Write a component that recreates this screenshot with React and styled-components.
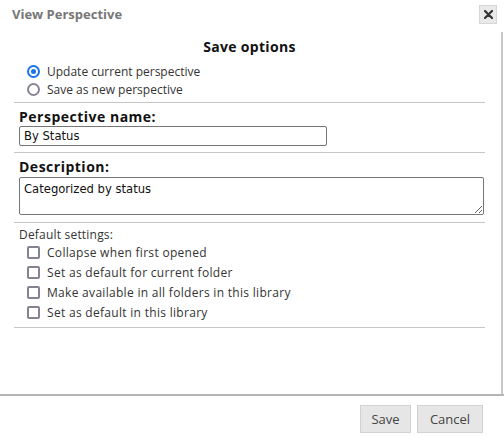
import React from 'react';
import styled, { createGlobalStyle } from 'styled-components';

const GlobalStyle = createGlobalStyle`
  html, body {
    margin: 0;
    padding: 0;
    background: #fff;
  }
  body {
    font-family: "Open Sans", "Liberation Sans", sans-serif;
    color: #222;
  }
`;

const Dialog = styled.div`
  width: 504px;
  height: 447px;
  display: flex;
  flex-direction: column;
  box-sizing: border-box;
  background: #fff;
`;

const Header = styled.div`
  height: 32px;
  display: flex;
  align-items: flex-start;
  justify-content: space-between;
  padding: 0 7px 0 12px;
  box-sizing: border-box;
`;

const Title = styled.div`
  font-size: 13px;
  font-weight: 700;
  color: #777;
  line-height: 28px;
`;

const CloseButton = styled.button`
  margin-top: 5px;
  width: 18px;
  height: 19px;
  padding: 0;
  border: 1px solid #d6d6d6;
  background: #e9e9e9;
  display: flex;
  align-items: center;
  justify-content: center;
`;

const Body = styled.div`
  flex: 1;
  border-right: 2px solid #c8c8c8;
  margin-right: 1px;
  padding: 0 16px 0 14px;
  display: flex;
  flex-direction: column;
`;

const SectionTitle = styled.div`
  margin-top: 5px;
  text-align: center;
  font-size: 14px;
  font-weight: 700;
  letter-spacing: 0.3px;
  line-height: 20px;
  color: #111;
`;

const OptionList = styled.div`
  margin-top: ${(p) => p.$top ?? 5}px;
  padding-left: 13px;
  display: flex;
  flex-direction: column;
`;

const OptionRow = styled.label`
  height: ${(p) => p.$h || 18}px;
  display: flex;
  align-items: center;
  gap: 7px;
  font-size: 12px;
  letter-spacing: ${(p) => p.$ls || 0}px;
  color: #333;
`;

const Radio = styled.span`
  width: 13px;
  height: 13px;
  box-sizing: border-box;
  border-radius: 50%;
  border: 2px solid ${(p) => (p.$checked ? '#1a73e8' : '#8a8594')};
  display: flex;
  align-items: center;
  justify-content: center;
  &::after {
    content: '';
    display: ${(p) => (p.$checked ? 'block' : 'none')};
    width: 5px;
    height: 5px;
    border-radius: 50%;
    background: #1a73e8;
  }
`;

const Checkbox = styled.span`
  width: 13px;
  height: 13px;
  box-sizing: border-box;
  border-radius: 2px;
  border: 2px solid #878190;
  background: #fff;
`;

const Divider = styled.div`
  height: 1px;
  background: #c6c6c6;
  margin-top: ${(p) => p.$top || 0}px;
`;

const FieldLabel = styled.div`
  margin-top: 5px;
  padding-left: 5px;
  font-size: 14px;
  font-weight: 700;
  letter-spacing: 0.5px;
  line-height: 18px;
  color: #111;
`;

const TextInput = styled.input`
  display: block;
  margin-left: 5px;
  width: 308px;
  height: 20px;
  box-sizing: border-box;
  border: 1px solid #767676;
  border-radius: 2px;
  padding: 0 4px;
  font-family: "DejaVu Sans", Verdana, sans-serif;
  font-size: 11.6px;
  color: #111;
  outline: none;
`;

const TextArea = styled.textarea`
  display: block;
  margin: 1px 0 0 5px;
  width: 465px;
  height: 38px;
  box-sizing: border-box;
  border: 1px solid #767676;
  border-radius: 2px;
  padding: 4px 4px;
  font-family: "DejaVu Sans", Verdana, sans-serif;
  font-size: 11.6px;
  color: #111;
  resize: both;
  outline: none;
`;

const PlainLabel = styled.div`
  margin-top: 4px;
  padding-left: 5px;
  font-size: 12px;
  letter-spacing: 0.2px;
  line-height: 15px;
  color: #333;
`;

const Footer = styled.div`
  border-top: 2px solid #b4b4b4;
  height: 53px;
  box-sizing: border-box;
  display: flex;
  justify-content: flex-end;
  align-items: flex-start;
  gap: 6px;
  padding: 9px 21px 0 0;
`;

const Button = styled.button`
  height: 28px;
  width: ${(p) => p.$w}px;
  padding: 0;
  border: 1px solid #d2d2d2;
  background: #e6e6e6;
  font-family: "Open Sans", "Liberation Sans", sans-serif;
  font-size: 13px;
  color: #444;
`;

const options = ['Update current perspective', 'Save as new perspective'];
const defaults = [
  'Collapse when first opened',
  'Set as default for current folder',
  'Make available in all folders in this library',
  'Set as default in this library',
];

export default function App() {
  return (
    <>
      <GlobalStyle />
      <Dialog>
        <Header>
          <Title>View Perspective</Title>
          <CloseButton aria-label="close">
            <svg width="9" height="9" viewBox="0 0 9 9">
              <path d="M1 1 L8 8 M8 1 L1 8" stroke="#333" strokeWidth="2.2" strokeLinecap="round" />
            </svg>
          </CloseButton>
        </Header>
        <Body>
          <SectionTitle>Save options</SectionTitle>
          <OptionList>
            {options.map((o, i) => (
              <OptionRow key={o}>
                <Radio $checked={i === 0} />
                {o}
              </OptionRow>
            ))}
          </OptionList>
          <Divider $top={4} />
          <FieldLabel>Perspective name:</FieldLabel>
          <TextInput defaultValue="By Status" />
          <Divider $top={6} />
          <FieldLabel>Description:</FieldLabel>
          <TextArea defaultValue="Categorized by status" />
          <Divider $top={7} />
          <PlainLabel>Default settings:</PlainLabel>
          <OptionList $top={0}>
            {defaults.map((d) => (
              <OptionRow key={d} $h={20} $ls={0.3}>
                <Checkbox />
                {d}
              </OptionRow>
            ))}
          </OptionList>
          <Divider $top={5} />
        </Body>
        <Footer>
          <Button $w={51}>Save</Button>
          <Button $w={66}>Cancel</Button>
        </Footer>
      </Dialog>
    </>
  );
}
